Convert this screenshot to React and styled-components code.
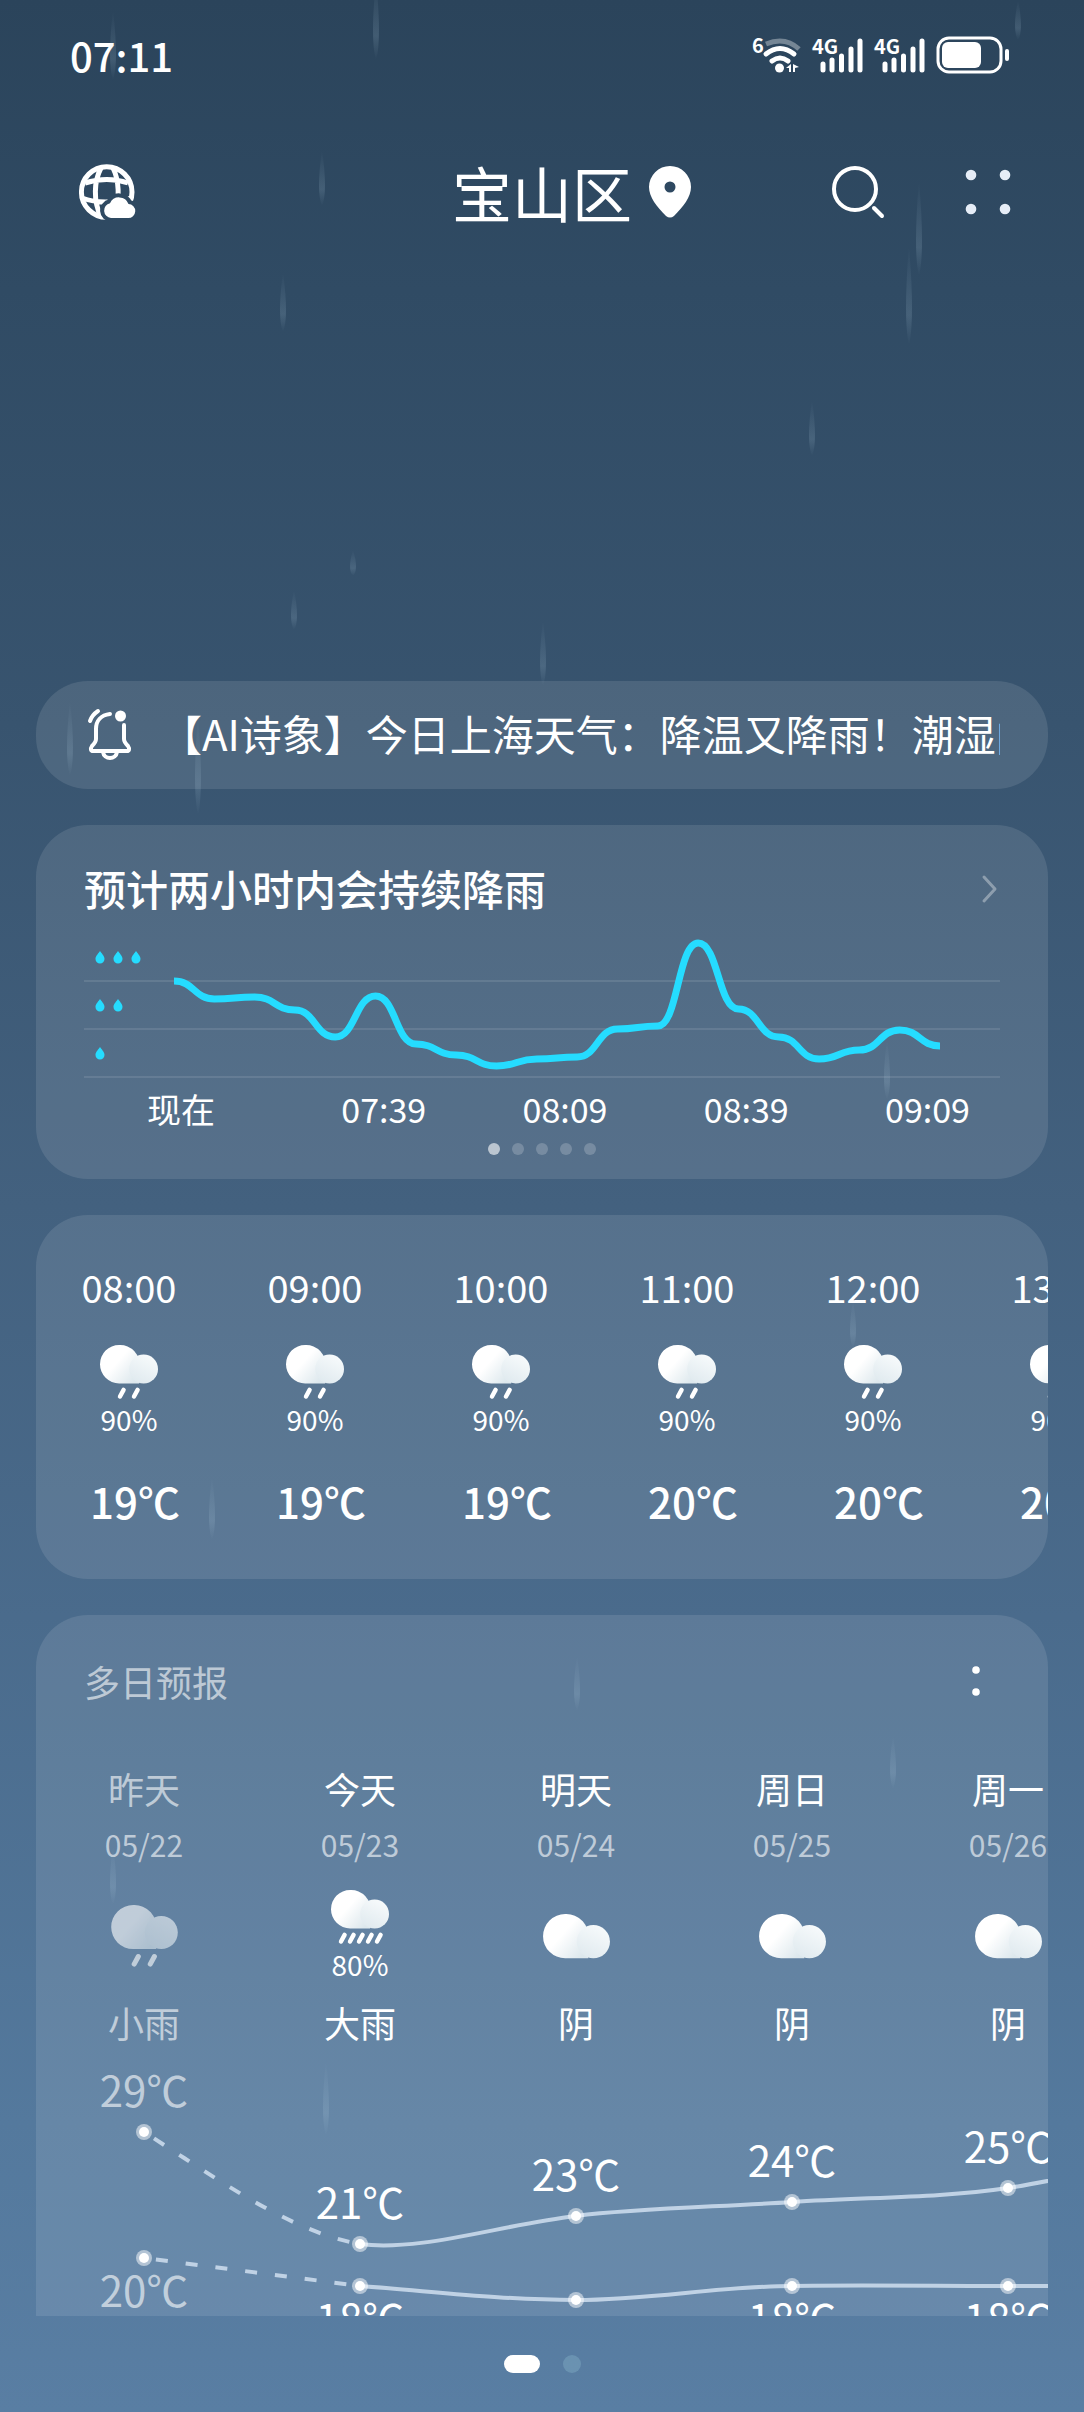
import { useId } from "react";
import styled, { createGlobalStyle } from "styled-components";

const GlobalStyle = createGlobalStyle`
  * {
    box-sizing: border-box;
  }
  body {
    margin: 0;
    color: #fff;
    font-family: "Noto Sans CJK SC", "Noto Sans", sans-serif;
    background: #2b445c;
  }
  h1, h2, p {
    margin: 0;
    font-weight: 400;
  }
  button {
    padding: 0;
    border: 0;
    background: none;
    color: inherit;
    font: inherit;
    cursor: pointer;
  }
  svg {
    display: block;
    flex-shrink: 0;
    overflow: visible;
  }
`

const Page = styled.div`
  position: relative;
  display: flex;
  flex-direction: column;
  height: 100vh;
  overflow: hidden;
  background: linear-gradient(180deg, #2b445b 0%, #304b64 12%, #38546f 30%, #43617f 50%, #4a6b8c 67%, #54799d 88%, #597ea3 100%);
`

const RainLayer = styled.svg`
  position: absolute;
  top: 0;
  left: 0;
  width: 100%;
  height: 100%;
  pointer-events: none;
`

const StatusBar = styled.div`
  display: flex;
  align-items: center;
  justify-content: space-between;
  height: 110px;
  padding: 0 74px 0 70px;
`

const Clock = styled.time`
  font-size: 40px;
  line-height: 48px;
  font-weight: 500;
`

const StatusIcons = styled.div`
  display: flex;
  align-items: center;
  gap: 10px;
`

const Header = styled.header`
  display: grid;
  grid-template-columns: 1fr auto 1fr;
  align-items: center;
  height: 164px;
  padding: 0 72px;
`

const City = styled.h1`
  font-size: 60px;
  line-height: 72px;
`

const HeaderActions = styled.div`
  display: flex;
  align-items: center;
  gap: 78px;
  padding-left: 17px;
`

const IconButton = styled.button`
  display: flex;
  align-items: center;
  justify-content: center;
  width: ${props => props.$size || 56}px;
  height: 56px;
  margin-left: ${props => props.$push ? 'auto' : 0};
`

const Content = styled.main`
  display: flex;
  flex-direction: column;
  gap: 36px;
  flex: 1;
  min-height: 0;
  padding: 407px 36px 0;
  overflow: hidden;
`

const Card = styled.section`
  flex-shrink: 0;
  border-radius: 52px;
  background: rgba(255, 255, 255, 0.105);
  overflow: hidden;
`

const Notice = styled(Card)`
  display: flex;
  align-items: center;
  gap: 28px;
  height: 108px;
  padding: 0 48px 0 52px;
`

const NoticeText = styled.p`
  flex: 1;
  min-width: 0;
  padding-bottom: 4px;
  font-size: 42px;
  line-height: 48px;
  white-space: nowrap;
  overflow: hidden;
`

const RainCard = styled(Card)`
  padding: 39px 48px 24px;
`

const RainHead = styled.div`
  display: flex;
  align-items: center;
  justify-content: space-between;
  margin-bottom: 14px;
`

const RainTitle = styled.h2`
  font-size: 42px;
  line-height: 48px;
  font-weight: 500;
`

const MoreButton = styled.button`
  width: 24px;
  height: 48px;
`

const RainChart = styled.svg`
  width: 100%;
  height: auto;
`

const Axis = styled.div`
  display: flex;
  justify-content: space-between;
  padding: 9px 30px 14px 63px;
  font-size: 34px;
  line-height: 40px;
`

const AxisLabel = styled.span`
  &:first-child {
    width: 98px;
  }
`

const Pager = styled.div`
  display: flex;
  justify-content: center;
  gap: 12px;
`

const PagerDot = styled.span`
  width: 12px;
  height: 12px;
  border-radius: 50%;
  background: rgba(255, 255, 255, ${props => props.$active ? 0.6 : 0.2});
`

const HourlyCard = styled(Card)`
  display: flex;
  padding: 48px 0 54px;
`

const Hour = styled.div`
  display: flex;
  flex-direction: column;
  align-items: center;
  flex: 0 0 186px;
`

const HourTime = styled.time`
  margin-bottom: 34px;
  font-size: 38px;
  line-height: 48px;
`

const Chance = styled.span`
  margin-top: 2px;
  font-size: 28px;
  line-height: 36px;
`

const HourTemp = styled.span`
  margin-top: 40px;
  padding-left: 12px;
  font-size: 42px;
  line-height: 48px;
  font-weight: 500;
`

const DailyCard = styled(Card)`
  padding-top: 38px;
  border-radius: 52px 52px 0 0;
`

const DailyHead = styled.div`
  display: flex;
  align-items: center;
  justify-content: space-between;
  margin-bottom: 55px;
  padding: 0 48px;
`

const DailyTitle = styled.h2`
  font-size: 36px;
  line-height: 48px;
  color: rgba(255, 255, 255, 0.6);
`

const Days = styled.div`
  display: flex;
  margin-bottom: 3px;
`

const Day = styled.div`
  display: flex;
  flex-direction: column;
  align-items: center;
  flex: 0 0 216px;
  font-size: 36px;
  line-height: 48px;
  color: rgba(255, 255, 255, ${props => props.$past ? 0.6 : 1});
`

const DayDate = styled.time`
  margin-top: 14px;
  font-size: 30px;
  line-height: 36px;
  color: rgba(255, 255, 255, 0.6);
`

const DayIcon = styled.div`
  display: flex;
  flex-direction: column;
  align-items: center;
  justify-content: center;
  height: 90px;
  margin: 29px 0 17px;
  opacity: ${props => props.$past ? 0.6 : 1};
`

const Footer = styled.footer`
  display: flex;
  justify-content: center;
  gap: 23px;
  height: 96px;
  padding-top: 39px;
`

const PageDot = styled.span`
  width: ${props => props.$active ? 36 : 18}px;
  height: 18px;
  border-radius: 9px;
  background: ${props => props.$active ? '#fff' : 'rgba(140, 185, 205, 0.35)'};
`

// x, top, length
const streaks = [
  [376, -20, 80], [113, 10, 70], [322, 150, 56], [919, 180, 96], [909, 245, 100], [283, 272, 60],
  [812, 400, 56], [353, 550, 26], [294, 590, 40], [543, 620, 66], [198, 715, 100], [70, 700, 76],
  [887, 1040, 60], [853, 1300, 48], [212, 1476, 64], [577, 1655, 56], [893, 1735, 54],
  [113, 1845, 60], [326, 2060, 76], [1018, 0, 40],
]

const hours = [
  ['08:00', 19], ['09:00', 19], ['10:00', 19], ['11:00', 20], ['12:00', 20], ['13:00', 20],
]

const days = [
  { name: '昨天', date: '05/22', text: '小雨', rain: 2, high: 29, low: 20, past: true },
  { name: '今天', date: '05/23', text: '大雨', rain: 5, chance: 80, high: 21, low: 18 },
  { name: '明天', date: '05/24', text: '阴', high: 23, low: 17 },
  { name: '周日', date: '05/25', text: '阴', high: 24, low: 18 },
  { name: '周一', date: '05/26', text: '阴', high: 25, low: 18 },
]

const rainLevels = [55, 73, 71, 84, 111, 70, 118, 129, 140, 133, 131, 103, 100, 17, 83, 111, 133, 124, 104, 120]

function rainPath() {
  const step = 766 / (rainLevels.length - 1)
  return rainLevels.map((y, i) => {
    const x = 90 + i * step
    if (i === 0) return `M${x} ${y}`
    const mid = x - step / 2
    return `C${mid} ${rainLevels[i - 1]} ${mid} ${y} ${x} ${y}`
  }).join(' ')
}

const Cloud = ({ width = 58, rain = 0 }) => {
  const id = useId()
  const drops = rain === 5 ? [10, 19, 28, 37, 46] : rain === 2 ? [20, 34] : []
  const height = rain ? 54 : 39
  return (
    <svg width={width} height={Math.round(width * height / 58)} viewBox={`0 0 58 ${height}`} aria-hidden="true">
      <defs>
        <linearGradient id={id + 'a'} x1="0.2" y1="0.3" x2="0.9" y2="0.9">
          <stop offset="0.3" stopColor="#fff" />
          <stop offset="1" stopColor="#dde8ed" />
        </linearGradient>
        <linearGradient id={id + 'b'} x1="0.8" y1="0" x2="0.3" y2="1">
          <stop offset="0" stopColor="#f8fbfc" />
          <stop offset="1" stopColor="#e0eaef" />
        </linearGradient>
      </defs>
      <path d="M19.2 0a19.2 19.2 0 0 0 0 38.4h20V22A19.2 19.2 0 0 0 19.2 0Z" fill={`url(#${id}a)`} />
      <circle cx="43.6" cy="24" r="14.4" fill={`url(#${id}b)`} />
      {drops.map(x => (
        <path key={x} d={`M${x} 51.5l3.6-6.6`} stroke="#fff" strokeWidth="4.4" strokeLinecap="round" />
      ))}
    </svg>
  )
}

const Signal = () => (
  <svg width="52" height="38" viewBox="0 0 52 38" aria-hidden="true">
    <text x="0" y="18" fill="#fff" fontSize="20" fontWeight="700">4G</text>
    <path d="M11 28v6M20 24v10M29.5 20v14M39 13v21M48 5v29" stroke="#fff" strokeWidth="5" strokeLinecap="round" />
  </svg>
)

const Wifi = () => (
  <svg width="50" height="38" viewBox="0 0 50 38" fill="none" aria-hidden="true">
    <text x="0" y="17" fill="#fff" fontSize="20" fontWeight="700">6</text>
    <path d="M14 8q19-8 33 5" stroke="#fff" strokeOpacity="0.35" strokeWidth="5" />
    <path d="M14 18q14-11 28 0M20 25q8-6 16 0" stroke="#fff" strokeWidth="5" strokeLinecap="round" />
    <circle cx="27.5" cy="32" r="4.5" fill="#fff" />
    <path d="M39 28v8h-2v-4h-3zM41 28l6 3-4 1v4h-2z" fill="#fff" />
  </svg>
)

const Battery = () => (
  <svg width="74" height="38" viewBox="0 0 74 38" aria-hidden="true">
    <rect x="2" y="2" width="63" height="34" rx="11" fill="none" stroke="#fff" strokeWidth="3" />
    <rect x="6" y="6" width="39" height="26" rx="6" fill="#fff" />
    <rect x="69" y="13" width="4" height="12" rx="2" fill="#fff" />
  </svg>
)

const Globe = () => (
  <svg width="56" height="56" viewBox="0 0 56 56" fill="none" aria-hidden="true">
    <mask id="globe-cut">
      <rect width="56" height="56" fill="#fff" />
      <path d="M32 54a7.5 7.5 0 0 1-1-14.8a10 10 0 0 1 18.5 0.8A7 7 0 0 1 49 54z" fill="#000" stroke="#000" strokeWidth="8" />
    </mask>
    <g mask="url(#globe-cut)" stroke="#fff" strokeWidth="5">
      <circle cx="27.7" cy="28" r="25.3" />
      <path d="M22 4c-7 13-8 33 0 49M34 4c6 12 7 30 2 47M6 19q22-7 43 0M3 34q22 8 50 0" />
    </g>
    <path d="M32 54a7.5 7.5 0 0 1-1-14.8a10 10 0 0 1 18.5 0.8A7 7 0 0 1 49 54z" fill="#fff" />
  </svg>
)

const Bell = () => (
  <svg width="44" height="54" viewBox="0 0 44 54" fill="none" stroke="#fff" strokeWidth="4" strokeLinecap="round" strokeLinejoin="round" aria-hidden="true">
    <path d="M22 6C13 7 8 13 8 21v10q0 3-4 7c-2 3-1 5 1 5h34c2 0 3-2 1-5q-4-4-4-7V17" />
    <path d="M15 44c1 8 13 8 14 0M2 13q2-6 8-10" />
    <circle cx="32.5" cy="8" r="5.5" fill="#fff" stroke="none" />
  </svg>
)

// one column is 216 wide, one degree is 14 high
const TempChart = () => (
  <svg width="1296" height="320" viewBox="0 0 1296 320" fill="none" aria-hidden="true">
    <g stroke="#c0d2e5" strokeWidth="4">
      <path d="M108 83C180 129 254 183 324 195M108 209L324 237" strokeDasharray="12 18" strokeDashoffset="-12" />
      <path d="M324 195C384 203 464 176 540 167C604 159 684 158 756 153C834 148 904 149 972 139C1024 131 1080 116 1188 101" />
      <path d="M324 237C394 242 464 251 540 251C614 251 684 237 756 237C814 236 904 237 972 237L1188 237" />
    </g>
    {days.map((day, i) => {
      const x = 108 + i * 216
      const top = 83 + (29 - day.high) * 14
      const bottom = 237 + (18 - day.low) * 14
      return (
        <g key={day.date} fill="#fff">
          <circle cx={x} cy={top} r="8" fillOpacity="0.5" />
          <circle cx={x} cy={top} r="5" />
          <circle cx={x} cy={bottom} r="8" fillOpacity="0.5" />
          <circle cx={x} cy={bottom} r="5" />
          <g fontSize="42" textAnchor="middle" fillOpacity={day.past ? 0.6 : 1}>
            <text x={x} y={top - 25}>{day.high}℃</text>
            <text x={x} y={bottom + 49}>{day.low}℃</text>
          </g>
        </g>
      )
    })}
  </svg>
)

const drop = (x, y) => (
  <path key={`${x}-${y}`} d={`M${x} ${y}c3 4 4.5 5.5 4.5 8a4.5 4.5 0 0 1-9 0c0-2.5 1.5-4 4.5-8z`} fill="#25dcff" />
)

export default function App() {
  return (
    <>
      <GlobalStyle />
      <Page>
        <RainLayer aria-hidden="true">
          <defs>
            <linearGradient id="streak" x1="0" y1="0" x2="0" y2="1">
              <stop offset="0" stopColor="#b8d4e6" stopOpacity="0" />
              <stop offset="0.7" stopColor="#b8d4e6" stopOpacity="0.16" />
              <stop offset="1" stopColor="#b8d4e6" stopOpacity="0" />
            </linearGradient>
          </defs>
          {streaks.map(([x, y, length]) => (
            <path
              key={`${x}-${y}`}
              d={`M${x} ${y}Q${x + 6} ${y + length * 0.75} ${x} ${y + length}Q${x - 6} ${y + length * 0.75} ${x} ${y}Z`}
              fill="url(#streak)"
            />
          ))}
        </RainLayer>

        <StatusBar>
          <Clock>07:11</Clock>
          <StatusIcons>
            <Wifi />
            <Signal />
            <Signal />
            <Battery />
          </StatusIcons>
        </StatusBar>

        <Header>
          <IconButton $size={70} aria-label="城市管理">
            <Globe />
          </IconButton>
          <City>宝山区</City>
          <HeaderActions>
            <svg width="42" height="52" viewBox="0 0 42 52" aria-hidden="true">
              <path fillRule="evenodd" d="M21 0a21 21 0 0 0-21 21c0 10 8 20 17 29q4 3 8 0c9-9 17-19 17-29a21 21 0 0 0-21-21zm0 15.5a5.5 5.5 0 1 1 0 11a5.5 5.5 0 0 1 0-11z" fill="#fff" />
            </svg>
            <IconButton $push aria-label="搜索">
              <svg width="56" height="56" viewBox="0 0 56 56" fill="none" stroke="#fff" strokeWidth="4" strokeLinecap="round" aria-hidden="true">
                <circle cx="25" cy="25" r="21" />
                <path d="M44 44l8 8" />
              </svg>
            </IconButton>
            <IconButton $size={48} aria-label="更多">
              <svg width="48" height="48" viewBox="0 0 48 48" fill="#e6edf7" aria-hidden="true">
                <circle cx="7" cy="7" r="5.3" />
                <circle cx="41" cy="7" r="5.3" />
                <circle cx="7" cy="41" r="5.3" />
                <circle cx="41" cy="41" r="5.3" />
              </svg>
            </IconButton>
          </HeaderActions>
        </Header>

        <Content>
          <Notice>
            <Bell />
            <NoticeText>【AI诗象】今日上海天气：降温又降雨！潮湿闷热</NoticeText>
          </Notice>

          <RainCard>
            <RainHead>
              <RainTitle>预计两小时内会持续降雨</RainTitle>
              <MoreButton aria-label="查看降雨详情">
                <svg width="24" height="48" viewBox="0 0 24 48" fill="none" aria-hidden="true">
                  <path d="M8 13l11 12L8 37" stroke="#fff" strokeOpacity="0.35" strokeWidth="3" strokeLinecap="round" strokeLinejoin="round" />
                </svg>
              </MoreButton>
            </RainHead>
            <RainChart viewBox="0 0 916 154" fill="none" role="img" aria-label="未来两小时降雨">
              <path d="M0 55H916M0 103H916M0 151H916" stroke="#fff" strokeOpacity="0.1" strokeWidth="2" />
              {[16, 34, 52].map(x => drop(x, 25))}
              {[16, 34].map(x => drop(x, 73))}
              {drop(16, 121)}
              <path d={rainPath()} stroke="#25dcff" strokeWidth="7" />
            </RainChart>
            <Axis>
              {['现在', '07:39', '08:09', '08:39', '09:09'].map(label => (
                <AxisLabel key={label}>{label}</AxisLabel>
              ))}
            </Axis>
            <Pager>
              {[0, 1, 2, 3, 4].map(i => <PagerDot key={i} $active={i === 0} />)}
            </Pager>
          </RainCard>

          <HourlyCard>
            {hours.map(([time, temp]) => (
              <Hour key={time}>
                <HourTime>{time}</HourTime>
                <Cloud rain={2} />
                <Chance>90%</Chance>
                <HourTemp>{temp}℃</HourTemp>
              </Hour>
            ))}
          </HourlyCard>

          <DailyCard>
            <DailyHead>
              <DailyTitle>多日预报</DailyTitle>
              <IconButton $size={48} aria-label="切换视图">
                <svg width="48" height="48" viewBox="0 0 48 48" fill="#fff" aria-hidden="true">
                  <circle cx="24" cy="13" r="3.8" />
                  <circle cx="24" cy="35" r="3.8" />
                </svg>
              </IconButton>
            </DailyHead>
            <Days>
              {days.map(day => (
                <Day key={day.date} $past={day.past}>
                  <span>{day.name}</span>
                  <DayDate>{day.date}</DayDate>
                  <DayIcon $past={day.past}>
                    <Cloud width={day.chance ? 58 : 67} rain={day.rain} />
                    {day.chance && <Chance>{day.chance}%</Chance>}
                  </DayIcon>
                  <span>{day.text}</span>
                </Day>
              ))}
            </Days>
            <TempChart />
          </DailyCard>
        </Content>

        <Footer>
          <PageDot $active />
          <PageDot />
        </Footer>
      </Page>
    </>
  )
}
